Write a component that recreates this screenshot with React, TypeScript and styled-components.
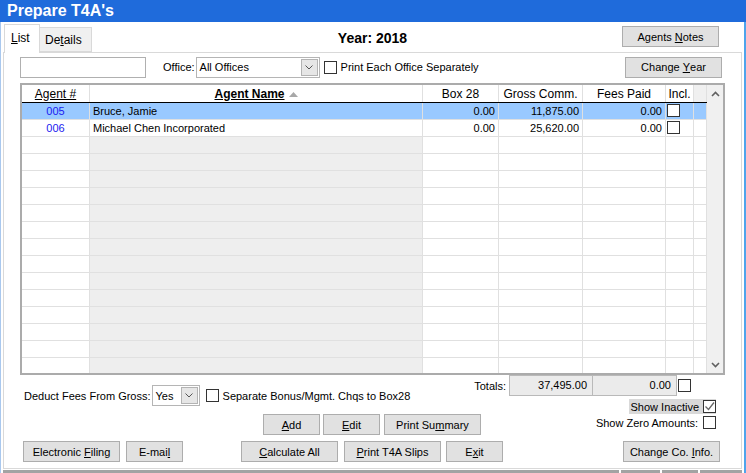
import styled, { createGlobalStyle } from "styled-components";

const GlobalStyle = createGlobalStyle`
  html, body {
    margin: 0;
    padding: 0;
    background: #fff;
  }
  body {
    font-family: "Liberation Sans", Arial, sans-serif;
    font-size: 11px;
    color: #000;
  }
  * {
    box-sizing: border-box;
  }
`;

const Window = styled.div`
  width: 746px;
  height: 473px;
  display: flex;
  flex-direction: column;
  overflow: hidden;
  background: #fff;
`;

const TitleBar = styled.div`
  height: 22px;
  flex: none;
  background: #1f6bdb;
  color: #fff;
  font-size: 16px;
  font-weight: bold;
  padding-left: 7px;
  line-height: 22px;
`;

const Frame = styled.div`
  flex: 1;
  min-height: 0;
  display: flex;
  flex-direction: column;
  border-left: 1px solid #a9c8ee;
  border-right: 2px solid #4ea4ec;
  padding: 0 2px;
`;

const TabsRow = styled.div`
  height: 30px;
  flex: none;
  display: grid;
  grid-template-columns: 1fr auto 1fr;
`;

const Tabs = styled.div`
  display: flex;
  align-items: flex-end;
  padding-left: 1px;
`;

const Tab = styled.div<{ $active?: boolean }>`
  position: relative;
  z-index: 1;
  font-size: 12px;
  border: 1px solid #d9d9d9;
  ${(p) =>
    p.$active
      ? `
    height: 29px;
    width: 36px;
    margin-bottom: -1px;
    background: #fff;
    border-bottom: none;
    padding: 6px 0 0 6px;
  `
      : `
    height: 25px;
    width: 52px;
    background: #f0f0f0;
    border-left: none;
    padding: 5px 0 0 5px;
  `}
`;

const Year = styled.div`
  align-self: center;
  font-size: 14px;
  font-weight: bold;
  padding-top: 1px;
`;

const Button = styled.div<{ $w: number }>`
  width: ${(p) => p.$w}px;
  height: 21px;
  flex: none;
  background: #e1e1e1;
  border: 1px solid #adadad;
  display: flex;
  align-items: center;
  justify-content: center;
  font-size: 11px;
  color: #000;
`;

const TopButton = styled(Button)`
  justify-self: end;
  margin: 4px 23px 0 0;
`;

const Panel = styled.div`
  flex: 1;
  min-height: 0;
  border: 1px solid #d9d9d9;
  display: flex;
  flex-direction: column;
  padding: 3px 16px 0 16px;
`;

const FilterRow = styled.div`
  height: 22px;
  flex: none;
  display: flex;
  align-items: center;
`;

const SearchBox = styled.div`
  width: 126px;
  height: 21px;
  border: 1px solid #b0b0b0;
  background: #fff;
`;

const Label = styled.span<{ $ml?: number }>`
  margin-left: ${(p) => p.$ml ?? 0}px;
  white-space: nowrap;
`;

const Combo = styled.div<{ $w: number; $ml?: number }>`
  width: ${(p) => p.$w}px;
  height: 21px;
  margin-left: ${(p) => p.$ml ?? 0}px;
  border: 1px solid #b5b5b5;
  background: #fff;
  display: flex;
  align-items: center;
  padding: 1px;
`;

const ComboText = styled.span`
  flex: 1;
  padding-left: 2px;
`;

const DropButton = styled.div`
  width: 17px;
  height: 17px;
  background: #e6e6e6;
  border: 1px solid #b3b3b3;
  display: flex;
  align-items: center;
  justify-content: center;
`;

const CheckBox = styled.div<{ $ml?: number }>`
  width: 13px;
  height: 13px;
  flex: none;
  margin-left: ${(p) => p.$ml ?? 0}px;
  border: 1px solid #333;
  background: #fff;
  display: flex;
  align-items: center;
  justify-content: center;
`;

const ChangeYear = styled(Button)`
  margin-left: auto;
  margin-right: 3px;
`;

const GridBox = styled.div`
  margin-top: 5px;
  height: 292px;
  flex: none;
  border: 2px solid #ababab;
  display: flex;
  overflow: hidden;
`;

const TableArea = styled.div`
  flex: 1;
  display: flex;
  flex-direction: column;
  overflow: hidden;
`;

const columns = "68px 333px 76px 84px 83px 28px 13px";

const HeaderRow = styled.div`
  display: grid;
  grid-template-columns: ${columns};
  height: 18px;
  flex: none;
  border-bottom: 1px solid #000;
`;

const HeaderCell = styled.div<{ $filler?: boolean }>`
  border-right: 1px solid #e0e0e0;
  background: ${(p) => (p.$filler ? "#f0f0f0" : "#fff")};
  display: flex;
  align-items: center;
  justify-content: center;
  white-space: nowrap;
  font-size: 12px;
  gap: 4px;
`;

const Strong = styled.b`
  text-decoration: underline;
`;

const DataRow = styled.div<{ $selected?: boolean }>`
  display: grid;
  grid-template-columns: ${columns};
  height: 17px;
  flex: none;
  border-bottom: 1px solid #e0e0e0;
  background: ${(p) => (p.$selected ? "#99c9ff" : "#fff")};
`;

const Cell = styled.div<{ $align?: string; $shade?: boolean; $blue?: boolean }>`
  border-right: 1px solid #e0e0e0;
  padding: 0 3px;
  line-height: 16px;
  white-space: nowrap;
  overflow: hidden;
  text-align: ${(p) => p.$align ?? "left"};
  color: ${(p) => (p.$blue ? "#1a1af0" : "#000")};
  ${(p) => (p.$shade ? "background: #eeeeee;" : "")}
`;

const CheckCell = styled.div`
  border-right: 1px solid #e0e0e0;
  padding: 1px 0 0 1px;
`;

const ScrollBar = styled.div`
  width: 16px;
  flex: none;
  background: #f0f0f0;
  display: flex;
  flex-direction: column;
  justify-content: space-between;
  align-items: center;
  padding: 6px 0 5px;
`;

const Bottom = styled.div`
  flex: 1;
  display: flex;
  flex-direction: column;
`;

const TopBand = styled.div`
  height: 39px;
  flex: none;
  display: flex;
  justify-content: space-between;
`;

const DeductRow = styled.div`
  margin: 10px 0 0 4px;
  height: 21px;
  display: flex;
  align-items: center;
`;

const RightStack = styled.div`
  display: flex;
  flex-direction: column;
  align-items: flex-end;
  margin-right: 9px;
`;

const TotalsRow = styled.div`
  height: 21px;
  margin-right: 25px;
  display: flex;
  align-items: center;
`;

const TotalBox = styled.div<{ $first?: boolean }>`
  width: 84px;
  height: 21px;
  margin-left: ${(p) => (p.$first ? 3 : 0)}px;
  background: #ebebeb;
  border: 1px solid #b9b9b9;
  ${(p) => (p.$first ? "" : "border-left: none;")}
  text-align: right;
  padding-right: 5px;
  line-height: 19px;
`;

const ShowInactive = styled.div`
  margin-top: 3px;
  height: 15px;
  background: #d9d9d9;
  display: flex;
  align-items: center;
  padding-left: 2px;
`;

const MidBand = styled.div`
  height: 27px;
  flex: none;
  display: flex;
  align-items: flex-start;
`;

const ButtonGroup = styled.div<{ $ml: number }>`
  margin-left: ${(p) => p.$ml}px;
  display: flex;
  gap: 3px;
`;

const ShowZero = styled.div`
  margin: 2px 9px 0 auto;
  display: flex;
  align-items: center;
`;

const BottomBand = styled.div`
  height: 21px;
  flex: none;
  display: flex;
`;

const Spaced = styled.div<{ $ml: number; $auto?: boolean }>`
  margin-left: ${(p) => (p.$auto ? "auto" : `${p.$ml}px`)};
  margin-right: ${(p) => (p.$auto ? "5px" : "0")};
`;

const StatusStrip = styled.div`
  height: 3px;
  margin-top: 1px;
  flex: none;
  display: flex;
  gap: 2px;
`;

const StripPart = styled.div<{ $w?: number }>`
  background: #a3a3a3;
  ${(p) => (p.$w ? `width: ${p.$w}px;` : "flex: 1;")}
`;

const Chevron = ({ up }: { up?: boolean }) => (
  <svg width="9" height="6" viewBox="0 0 9 6">
    <polyline
      points={up ? "1,5 4.5,1.5 8,5" : "1,1 4.5,4.5 8,1"}
      fill="none"
      stroke="#606060"
      strokeWidth="1.6"
    />
  </svg>
);

const SmallChevron = () => (
  <svg width="8" height="5" viewBox="0 0 8 5">
    <polyline points="0.5,0.5 4,4 7.5,0.5" fill="none" stroke="#555" strokeWidth="1" />
  </svg>
);

const Tick = () => (
  <svg width="11" height="11" viewBox="0 0 11 11">
    <polyline points="1.5,5.5 4.5,8.5 10,1.5" fill="none" stroke="#666" strokeWidth="1.3" />
  </svg>
);

const SortUp = () => (
  <svg width="9" height="6" viewBox="0 0 9 6">
    <polygon points="0,6 4.5,1 9,6" fill="#a8a8a8" />
  </svg>
);

interface Agent {
  id: string;
  name: string;
  box28: string;
  gross: string;
  fees: string;
}

const agents: Agent[] = [
  { id: "005", name: "Bruce, Jamie", box28: "0.00", gross: "11,875.00", fees: "0.00" },
  { id: "006", name: "Michael Chen Incorporated", box28: "0.00", gross: "25,620.00", fees: "0.00" },
];

const emptyRows = Array.from({ length: 14 }, (_, i) => i);

function App() {
  return (
    <Window>
      <GlobalStyle />
      <TitleBar>Prepare T4A's</TitleBar>
      <Frame>
        <TabsRow>
          <Tabs>
            <Tab $active>
              <u>L</u>ist
            </Tab>
            <Tab>
              De<u>t</u>ails
            </Tab>
          </Tabs>
          <Year>Year: 2018</Year>
          <TopButton $w={97}>
            Agents&nbsp;<u>N</u>otes
          </TopButton>
        </TabsRow>

        <Panel>
          <FilterRow>
            <SearchBox />
            <Label $ml={17}>Office:</Label>
            <Combo $w={124} $ml={1}>
              <ComboText>All Offices</ComboText>
              <DropButton>
                <SmallChevron />
              </DropButton>
            </Combo>
            <CheckBox $ml={4} />
            <Label $ml={4}>Print Each Office Separately</Label>
            <ChangeYear $w={97}>
              Change&nbsp;<u>Y</u>ear
            </ChangeYear>
          </FilterRow>

          <GridBox>
            <TableArea>
              <HeaderRow>
                <HeaderCell>
                  <u>Agent #</u>
                </HeaderCell>
                <HeaderCell>
                  <Strong>Agent Name</Strong>
                  <SortUp />
                </HeaderCell>
                <HeaderCell>Box 28</HeaderCell>
                <HeaderCell>Gross Comm.</HeaderCell>
                <HeaderCell>Fees Paid</HeaderCell>
                <HeaderCell>Incl.</HeaderCell>
                <HeaderCell $filler />
              </HeaderRow>
              {agents.map((a, i) => (
                <DataRow key={a.id} $selected={i === 0}>
                  <Cell $align="center" $blue>
                    {a.id}
                  </Cell>
                  <Cell>{a.name}</Cell>
                  <Cell $align="right">{a.box28}</Cell>
                  <Cell $align="right">{a.gross}</Cell>
                  <Cell $align="right">{a.fees}</Cell>
                  <CheckCell>
                    <CheckBox />
                  </CheckCell>
                  <Cell />
                </DataRow>
              ))}
              {emptyRows.map((i) => (
                <DataRow key={`e${i}`}>
                  <Cell />
                  <Cell $shade />
                  <Cell />
                  <Cell />
                  <Cell />
                  <Cell />
                  <Cell />
                </DataRow>
              ))}
            </TableArea>
            <ScrollBar>
              <Chevron up />
              <Chevron />
            </ScrollBar>
          </GridBox>

          <Bottom>
            <TopBand>
              <DeductRow>
                <Label>Deduct Fees From Gross:</Label>
                <Combo $w={48} $ml={1}>
                  <ComboText>Yes</ComboText>
                  <DropButton>
                    <SmallChevron />
                  </DropButton>
                </Combo>
                <CheckBox $ml={6} />
                <Label $ml={4}>Separate Bonus/Mgmt. Chqs to Box28</Label>
              </DeductRow>
              <RightStack>
                <TotalsRow>
                  <Label>Totals:</Label>
                  <TotalBox $first>37,495.00</TotalBox>
                  <TotalBox>0.00</TotalBox>
                  <CheckBox $ml={1} />
                </TotalsRow>
                <ShowInactive>
                  <Label>Show Inactive</Label>
                  <CheckBox $ml={4}>
                    <Tick />
                  </CheckBox>
                </ShowInactive>
              </RightStack>
            </TopBand>

            <MidBand>
              <ButtonGroup $ml={243}>
                <Button $w={57}>
                  <u>A</u>dd
                </Button>
                <Button $w={57}>
                  <u>E</u>dit
                </Button>
                <Spaced $ml={1}>
                  <Button $w={97}>
                    Print Su<u>m</u>mary
                  </Button>
                </Spaced>
              </ButtonGroup>
              <ShowZero>
                <Label>Show Zero Amounts:</Label>
                <CheckBox $ml={5} />
              </ShowZero>
            </MidBand>

            <BottomBand>
              <Spaced $ml={3}>
                <Button $w={97}>
                  Electronic&nbsp;<u>F</u>iling
                </Button>
              </Spaced>
              <Spaced $ml={6}>
                <Button $w={57}>
                  E-mai<u>l</u>
                </Button>
              </Spaced>
              <Spaced $ml={58}>
                <Button $w={97}>
                  <u>C</u>alculate All
                </Button>
              </Spaced>
              <Spaced $ml={6}>
                <Button $w={97}>
                  <u>P</u>rint T4A Slips
                </Button>
              </Spaced>
              <Spaced $ml={5}>
                <Button $w={57}>
                  E<u>x</u>it
                </Button>
              </Spaced>
              <Spaced $ml={0} $auto>
                <Button $w={97}>
                  Change Co.&nbsp;<u>I</u>nfo.
                </Button>
              </Spaced>
            </BottomBand>
          </Bottom>
        </Panel>
        <StatusStrip>
          <StripPart $w={616} />
          <StripPart $w={39} />
          <StripPart $w={36} />
          <StripPart />
        </StatusStrip>
      </Frame>
    </Window>
  );
}

export default App;
